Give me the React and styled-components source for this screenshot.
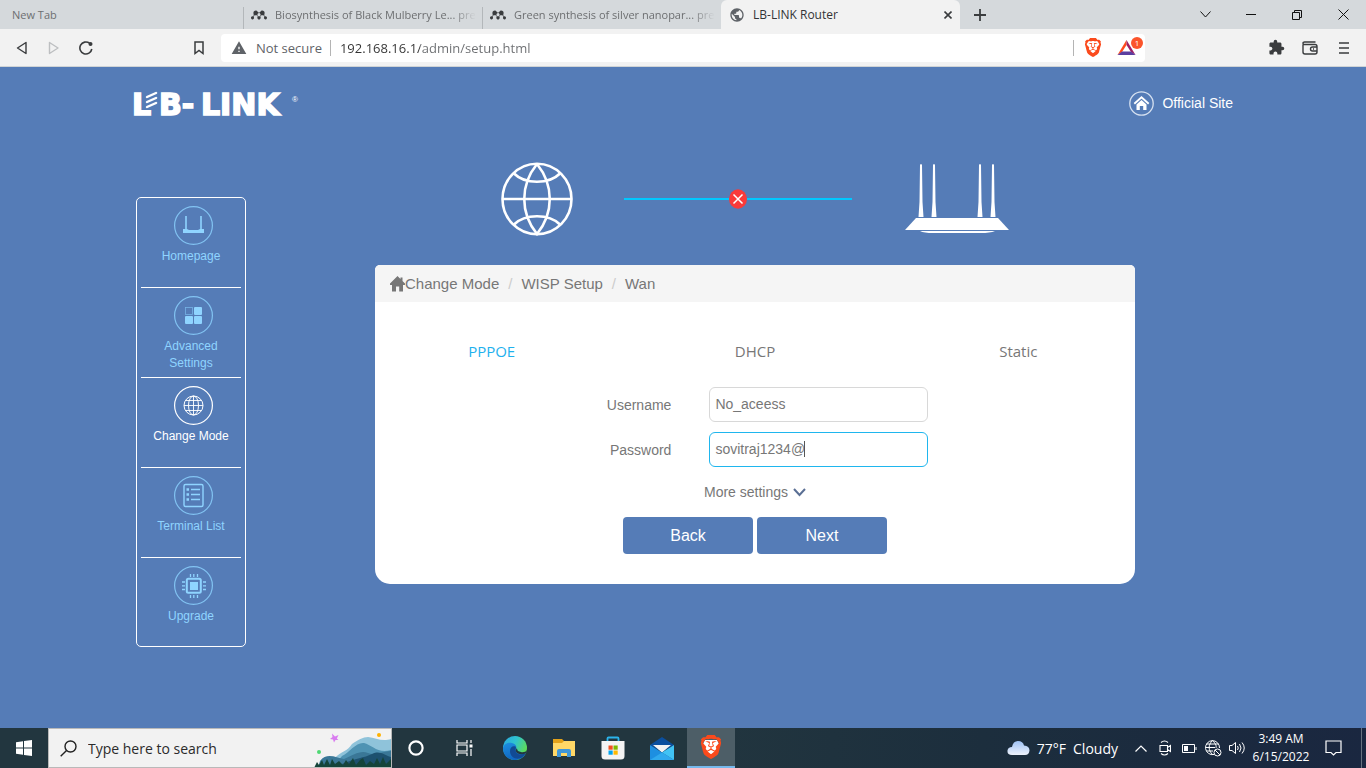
import React from "react";
import styled, { createGlobalStyle, css } from "styled-components";
import { SiBrave, SiMendeley } from "react-icons/si";
import { MdPublic, MdExtension, MdWarning } from "react-icons/md";

const ui = `"Open Sans", "Noto Sans", sans-serif`;
const arial = `"Liberation Sans", Arial, sans-serif`;

const GlobalStyle = createGlobalStyle`
  *, *::before, *::after { box-sizing: border-box; }
  body { margin: 0; font-family: ${arial}; background: #557cb7; }
  button, input { font: inherit; margin: 0; }
  button { border: 0; padding: 0; background: none; color: inherit; }
  a { color: inherit; text-decoration: none; }
  svg { display: block; flex: none; }
`;

const Screen = styled.div`
  display: flex;
  flex-direction: column;
  min-height: 100vh;
`;

/* ---------- browser chrome ---------- */

const TabStrip = styled.div`
  display: flex;
  align-items: stretch;
  height: 29px;
  background: #d5d9dc;
  font-family: ${ui};
  font-size: 11px;
  color: #6d6f71;
`;

const Tab = styled.div`
  display: flex;
  align-items: center;
  gap: 8px;
  flex: 0 1 239px;
  min-width: 0;
  padding: 0 6px 0 8px;
  ${(p) =>
    p.$divided &&
    css`
      background: linear-gradient(#b3b7ba, #b3b7ba) left bottom / 1px 22px no-repeat;
    `}
  ${(p) =>
    p.$plain &&
    css`
      flex-basis: 243px;
      padding-left: 12px;
    `}
  ${(p) =>
    p.$active &&
    css`
      background: #f2f2f2;
      border-radius: 6px 6px 0 0;
      font-size: 12px;
      color: #333436;
    `}
`;

const TabTitle = styled.span`
  flex: 1;
  min-width: 0;
  overflow: hidden;
  white-space: nowrap;
  mask-image: ${(p) => (p.$fade ? "linear-gradient(90deg, #000 88%, transparent)" : "none")};
`;

const IconButton = styled.button`
  display: flex;
  align-items: center;
  justify-content: center;
  flex: none;
  width: ${(p) => p.$w || 32}px;
  color: ${(p) => p.$color || "#3a3c3e"};
`;

const WindowControls = styled.div`
  display: flex;
  margin-left: auto;
`;

const Toolbar = styled.div`
  display: flex;
  align-items: center;
  height: 38px;
  background: #f2f2f2;
  border-bottom: 1px solid #d0d4d6;
  font-family: ${ui};
`;

const NavButtons = styled.div`
  display: flex;
  width: 221px;
  padding: 0 6px;
`;

const BookmarkSlot = styled.div`
  display: flex;
  margin-left: auto;
`;

const Omnibox = styled.div`
  display: flex;
  align-items: center;
  flex: 1;
  height: 28px;
  padding-left: 10px;
  border-radius: 4px;
  background: #fff;
  font-size: 13px;
  color: #5f6368;
`;

const SecurityLabel = styled.span`
  margin: 0 8px 0 9px;
  white-space: nowrap;
`;

const Divider = styled.span`
  width: 1px;
  height: 16px;
  background: #b4b4b4;
`;

const UrlInput = styled.input`
  flex: 1;
  min-width: 0;
  padding: 0 9px;
  border: 0;
  outline: 0;
  color: transparent;
  background: linear-gradient(90deg, #333 89px, #6b6d70 89px);
  background-clip: text;
`;

const ShieldSlot = styled.span`
  display: flex;
  margin: 0 16px 0 11px;
`;

const RewardsSlot = styled.span`
  position: relative;
  display: flex;
  padding-right: 9px;
`;

const RewardsBadge = styled.span`
  position: absolute;
  top: -2px;
  right: 2px;
  width: 12px;
  height: 12px;
  border-radius: 6px;
  background: #fb542b;
  color: #fff;
  font-size: 8px;
  line-height: 12px;
  text-align: center;
`;

const ToolbarActions = styled.div`
  display: flex;
  justify-content: flex-end;
  width: 221px;
  padding-right: 5px;
`;

/* ---------- router page ---------- */

const Page = styled.main`
  flex: 1;
  background: #557cb7;
  color: #fff;
`;

const Container = styled.div`
  width: 100%;
  max-width: 1100px;
  margin: 0 auto;
`;

const SiteHeader = styled.header`
  display: flex;
  justify-content: space-between;
  padding-top: 20px;
`;

const OfficialLink = styled.a`
  display: flex;
  align-items: center;
  gap: 8px;
  height: 32px;
  font-size: 14px;
`;

const Columns = styled.div`
  display: flex;
  align-items: flex-start;
  padding: 37px 98px 0 3px;
`;

const SideNav = styled.nav`
  flex: none;
  width: 110px;
  margin: 35px 129px 0 0;
  padding: 0 4px;
  border: 1px solid #fff;
  border-radius: 5px;
`;

const SideItem = styled.a`
  display: flex;
  flex-direction: column;
  align-items: center;
  height: 90px;
  padding-top: 8px;
  border-bottom: 1px solid #fff;
  font-size: 12px;
  line-height: 17px;
  text-align: center;
  color: ${(p) => (p.$current ? "#fff" : "#8fd4ff")};
  &:last-child {
    height: 88px;
    border-bottom: 0;
  }
  svg {
    margin: 0 0 3px 4px;
  }
`;

const Content = styled.section`
  flex: 1;
  min-width: 0;
`;

const Topology = styled.div`
  display: flex;
  align-items: center;
  padding: 0 126px;
  height: 74px;
`;

const Link = styled.div`
  display: flex;
  align-items: center;
  flex: 1;
  margin: 0 53px 0 51px;
  &::before,
  &::after {
    content: "";
    flex: 1;
    height: 2px;
    background: #00c8ff;
  }
`;

const Card = styled.div`
  margin-top: 29px;
  padding-bottom: 30px;
  border-radius: 5px 5px 15px 15px;
  background: #fff;
  color: #777;
`;

const Breadcrumb = styled.div`
  display: flex;
  align-items: center;
  height: 37px;
  padding: 0 15px;
  border-radius: 5px 5px 0 0;
  background: #f5f5f5;
  font-size: 15px;
`;

const Slash = styled.span`
  margin: 0 9px;
  color: #ccc;
`;

const ModeTabs = styled.div`
  display: grid;
  grid-template-columns: repeat(3, 1fr);
  margin: 39px -15px 0;
  font-family: ${ui};
  font-size: 15px;
  line-height: 20px;
`;

const ModeTab = styled.button`
  color: ${(p) => (p.$active ? "#1fb1ee" : "#777")};
`;

const Form = styled.form`
  display: flex;
  flex-direction: column;
  gap: 10px;
  margin-top: 26px;
  font-size: 14px;
`;

const Field = styled.div`
  display: grid;
  grid-template-columns: 39% 1fr;
  column-gap: 38px;
  align-items: center;
`;

const FieldLabel = styled.label`
  text-align: right;
`;

const InputWrap = styled.div`
  position: relative;
  width: 219px;
`;

const TextInput = styled.input`
  width: 100%;
  height: 35px;
  padding: 0 5px 2px;
  border: 1px solid ${(p) => (p.$active ? "#1fb6ee" : "#d8d8d8")};
  border-radius: 6px;
  outline: 0;
  background: #fff;
  color: #777;
`;

const Caret = styled.span`
  position: absolute;
  top: 9px;
  left: 95px;
  width: 1px;
  height: 16px;
  background: #555;
`;

const MoreSettings = styled.button`
  display: flex;
  align-items: center;
  align-self: center;
  gap: 5px;
  height: 20px;
  margin: 5px 0;
`;

const Actions = styled.div`
  display: flex;
  justify-content: center;
  gap: 4px;
`;

const ActionButton = styled.button`
  width: 130px;
  height: 37px;
  border-radius: 4px;
  background: #557cb7;
  color: #fff;
  font-size: 16px;
`;

/* ---------- taskbar ---------- */

const Taskbar = styled.footer`
  display: flex;
  height: 40px;
  background: linear-gradient(90deg, #22363f 0%, #22363f 50%, #1c2e3d 72%, #1a2740 100%);
  color: #fff;
  font-family: ${ui};
`;

const TaskButton = styled.button`
  display: flex;
  align-items: center;
  justify-content: center;
  width: 48px;
  background: ${(p) => (p.$active ? "#4d5e67" : "none")};
  border-bottom: ${(p) => (p.$active ? "2px solid #76b9ed" : "0")};
`;

const TaskSearch = styled.label`
  display: flex;
  align-items: center;
  width: 344px;
  padding-left: 11px;
  border: 1px solid #b9b9b9;
  background: #f2f2f2;
  overflow: hidden;
`;

const TaskSearchInput = styled.input`
  flex: 1;
  min-width: 0;
  padding: 0 0 0 11px;
  border: 0;
  outline: 0;
  background: none;
  font-size: 14px;
  &::placeholder {
    color: #2b2b2b;
    opacity: 1;
  }
`;

const PinnedApps = styled.div`
  display: flex;
  gap: 1px;
  margin-left: 3px;
`;

const Tray = styled.div`
  display: flex;
  align-items: stretch;
  margin-left: auto;
`;

const Weather = styled.button`
  display: flex;
  align-items: center;
  gap: 7px;
  margin-right: 11px;
  font-size: 14px;
`;

const Clock = styled.div`
  display: flex;
  flex-direction: column;
  justify-content: center;
  width: 64px;
  font-size: 12px;
  line-height: 18px;
  text-align: center;
`;

const ShowDesktop = styled.button`
  width: 5px;
  margin-left: 8px;
  border-left: 1px solid #66727f;
`;

/* ---------- drawings ---------- */

const Stroke = ({ w, h, sw = 1, children, ...rest }) => (
  <svg width={w} height={h} viewBox={`0 0 ${w} ${h}`} fill="none" stroke="currentColor" strokeWidth={sw} aria-hidden="true" {...rest}>
    {children}
  </svg>
);

const BraveIcon = ({ w, h }) => (
  <svg width={w} height={h} viewBox="2 0 20 24" aria-hidden="true">
    <path d="M6 5 L18 5 L20 9 L17 18 L12 22 L7 18 L4 9Z" fill="#fff" />
    <SiBrave size={24} color="#fb4a1c" />
  </svg>
);

const BatIcon = () => (
  <svg width="19" height="17" viewBox="0 0 19 17" aria-hidden="true">
    <path d="M9.5 1 L0.5 16 L5 13 L9.5 6Z" fill="#ff4a1c" />
    <path d="M9.5 1 L18.5 16 L14 13 L9.5 6Z" fill="#9e1f63" />
    <path d="M0.5 16 H18.5 L14 12.500 H5Z" fill="#5b3fa0" />
  </svg>
);

const Logo = () => (
  <svg width="168" height="38" viewBox="0 0 168 38" role="img" aria-label="LB-LINK">
    <g fill="#fff" stroke="#fff" strokeWidth="1.600" fontFamily="DejaVu Sans" fontWeight="700" fontSize="30">
      <text x="-1" y="28">L</text>
      <text x="26" y="28">B-</text>
      <text x="68" y="28">LINK</text>
    </g>
    <g stroke="#fff" strokeWidth="2.400" strokeLinecap="round">
      <path d="M14 10 L23 6" />
      <path d="M14 15 L23 11" />
      <path d="M14 20 L23 16" />
    </g>
    <text x="159" y="15" fill="#fff" fontFamily="Liberation Sans" fontSize="8">®</text>
  </svg>
);

const OfficialIcon = () => (
  <Stroke w={25} h={25}>
    <circle cx="12.500" cy="12.500" r="11.700" stroke="#d5e0f0" strokeWidth="1.300" />
    <path d="M5.300 12.800 L12.500 6.300 L19.700 12.800" stroke="#fff" strokeWidth="1.900" />
    <path d="M7.500 13.500 L12.500 9 L17.500 13.500 V19 H14.200 V15 H10.800 V19 H7.500Z" fill="#fff" stroke="none" />
  </Stroke>
);

const Circle = ({ children, ring = "#82c3f2" }) => (
  <Stroke w={39} h={39}>
    <circle cx="19.500" cy="19.500" r="18.900" stroke={ring} strokeWidth="1.200" />
    {children}
  </Stroke>
);

const HomepageIcon = () => (
  <Circle>
    <path d="M12 10 V23 M27 10 V23" strokeWidth="1.600" />
    <path d="M9 23 H13 L15 24 H24 L26 23 H30 V27 H9Z" fill="currentColor" stroke="none" />
  </Circle>
);

const AdvancedIcon = () => (
  <Circle>
    <rect x="11.500" y="11.500" width="7" height="7" strokeWidth="0.800" stroke="#77b4e6" />
    <g fill="currentColor" stroke="none">
      <rect x="20" y="11" width="8" height="8" rx="1" />
      <rect x="11" y="20" width="8" height="8" rx="1" />
      <rect x="20" y="20" width="8" height="8" rx="1" />
    </g>
  </Circle>
);

const ModeIcon = () => (
  <Circle ring="#fff">
    <circle cx="19.500" cy="19.500" r="9.500" />
    <ellipse cx="19.500" cy="19.500" rx="5" ry="9.500" />
    <path d="M19.500 10 V29 M10 19.500 H29 M11.500 14.500 H27.500 M11.500 24.500 H27.500" strokeWidth="0.900" />
  </Circle>
);

const TerminalIcon = () => (
  <Circle>
    <rect x="10" y="8.500" width="19" height="22" rx="1.500" strokeWidth="1.400" />
    <path d="M17 13.500 H26 M17 18.500 H26 M17 23.500 H26" strokeWidth="1.300" />
    <path d="M12.500 13.500 H15 M12.500 18.500 H15 M12.500 23.500 H15" strokeWidth="2.400" />
  </Circle>
);

const UpgradeIcon = () => (
  <Circle>
    <rect x="12.800" y="12.800" width="14" height="14" rx="1.500" strokeWidth="2" />
    <rect x="16" y="16" width="8" height="8" fill="currentColor" stroke="none" />
    <path d="M16.500 8 V11 M19.800 8 V11 M23.500 8 V11 M16.500 29 V32 M19.800 29 V32 M23.500 29 V32 M8 16 H11 M8 19.800 H11 M8 23.500 H11 M29 16 H32 M29 19.800 H32 M29 23.500 H32" strokeWidth="1.300" />
  </Circle>
);

const BigGlobe = () => (
  <Stroke w={72} h={74} sw={2.600}>
    <ellipse cx="36" cy="37" rx="34.500" ry="35.200" />
    <path d="M1.500 37 H70.500 M36 2 C19 23 19 51 36 72 C53 51 53 23 36 2 M13 11.500 C24 22.500 48 22.500 59 11.500 M13 62.500 C24 51.500 48 51.500 59 62.500" />
  </Stroke>
);

const BigRouter = () => (
  <svg width="104" height="74" viewBox="0 0 104 74" fill="#fff" aria-hidden="true">
    {[16, 29, 75, 88].map((x) => (
      <path key={x} d={`M${x - 1} 3 Q${x} 1 ${x + 1} 3 L${x + 1.5} 40 L${x + 2.5} 55 H${x - 2.5} L${x - 1.5} 40Z`} />
    ))}
    <path d="M11 56 H93 L104 68 H0Z" />
    <path d="M15 69 H90 Q85 71 76 71 H28 Q19 71 15 69Z" />
  </svg>
);

const ErrorDot = () => (
  <Stroke w={18} h={20} sw={1.500}>
    <ellipse cx="9" cy="10" rx="9" ry="9.700" fill="#f93a3a" stroke="none" />
    <path d="M4.500 5.500 L13.500 14.500 M13.500 5.500 L4.500 14.500" stroke="#fff" />
  </Stroke>
);

const HomeGlyph = () => (
  <svg width="15" height="16" viewBox="0 0 15 16" fill="#777" aria-hidden="true">
    <path d="M7.500 0 L10.500 3 V1.500 H12.500 V5 L15.500 8 L14.800 9 H13 V15.500 H9.200 V10.500 H6 V15.500 H2 V9 H0.200 L-0.500 8Z" />
  </svg>
);

const SearchArt = () => (
  <svg width="77" height="40" viewBox="0 0 77 40" aria-hidden="true">
    <path d="M20 31 C28 22 33 24 38 16 C44 12 49 9 54 9 C62 10 68 14 77 11 V40 H12Z" fill="#8fc3da" />
    <path d="M28 28 C36 24 42 14 50 15 C58 17 64 26 77 22 V40 H18Z" fill="#4f93b3" />
    <path d="M6 33 C13 24 22 30 30 31 C40 27 46 22 54 25 C60 28 66 24 77 23 V40 H4Z" fill="#3a7797" />
    <path d="M28 36 C42 30 50 30 58 26 C66 22 70 27 77 29 V40 H24Z" fill="#1d516f" />
    <path d="M0 40 L3 34 L5 37 L8 32 L10 37 L13 31 L16 37 L18 31 L21 36 L25 33 L29 37 L32 32 L35 36 L39 30 L42 37 L46 32 L49 30 L52 37 L56 33 L60 36 L63 30 L66 36 L69 29 L72 36 L77 31 V40Z" fill="#15443a" />
    <path d="M18 5.500 L21 8.500 L24.500 7 L22.800 10.500 L24.500 12 L21.500 12 L20 14.500 L19 11.500 L16 11 L18.500 9Z" fill="#d97cf0" />
    <circle cx="65" cy="7" r="2" fill="#ffb200" />
    <circle cx="5" cy="24" r="2" fill="#4fd873" />
  </svg>
);

const WindowsLogo = () => (
  <svg width="16" height="16" viewBox="0 0 16 16" fill="#fff" aria-hidden="true">
    <path d="M0 2.200 L7 1.200 V7.500 H0Z M8 1 L16 0 V7.500 H8Z M0 8.500 H7 V14.800 L0 13.800Z M8 8.500 H16 V16 L8 15Z" />
  </svg>
);

const EdgeIcon = () => (
  <svg width="24" height="24" viewBox="0 0 24 24" aria-hidden="true">
    <defs>
      <linearGradient id="edgeTop" x1="0" y1="0" x2="1" y2="0.500">
        <stop offset="0" stopColor="#2aa5e0" />
        <stop offset="0.500" stopColor="#2fc3d0" />
        <stop offset="1" stopColor="#5fdc55" />
      </linearGradient>
      <linearGradient id="edgeSide" x1="0" y1="0" x2="0.300" y2="1">
        <stop offset="0" stopColor="#1d8fe0" />
        <stop offset="1" stopColor="#1066c0" />
      </linearGradient>
    </defs>
    <circle cx="12" cy="12" r="12" fill="url(#edgeTop)" />
    <path d="M0 12 C1 7 6 6 9 7 C13 8 14 11 13 13 C12 15 14 18 18 18 C20 18 22 17 23 17 C20 23 15 24 12 24 C5 24 0 19 0 12Z" fill="url(#edgeSide)" />
    <path d="M7 15 C7 11 10 9.500 12.500 10.500 C13.500 12 12.500 13 12.500 14 C12.500 17 15 18.500 18 18.500 C20 18.500 22 17.500 22.600 17.600 C20 22 16 23 13.500 22.600 C9.500 22 7 19 7 15Z" fill="#124a94" />
    <path d="M13.500 12 C14 13 12.600 13.500 12.600 14.500 C13 18 19 19.500 23 17.300 C23.300 16.700 24 15 24 14 C23 16 20 16.500 18 16 C15.500 15.500 14 14.500 14.200 13Z" fill="#22363f" />
  </svg>
);

const ExplorerIcon = () => (
  <svg width="22" height="18" viewBox="0 0 22 18" aria-hidden="true">
    <path d="M0 0 H9 L11 2 H22 V6 H0Z" fill="#e3a21a" />
    <path d="M0 4 H9 L11 2 H22 V17 H0Z" fill="#ffd867" />
    <path d="M4 18 V12 Q4 10 6 10 H16 Q18 10 18 12 V18 H14 V14 H8 V18Z" fill="#3f97d9" />
  </svg>
);

const StoreIcon = () => (
  <svg width="24" height="24" viewBox="0 0 24 24" aria-hidden="true">
    <path d="M6.500 6 V2.500 Q6.500 1.500 7.500 1.500 H16.500 Q17.500 1.500 17.500 2.500 V6" fill="none" stroke="#2bb4ec" strokeWidth="1.800" />
    <path d="M0.500 5 H23.500 V20 Q23.500 23.500 20 23.500 H4 Q0.500 23.500 0.500 20Z" fill="#f4f4f4" />
    <rect x="7.500" y="9.500" width="4.200" height="4.200" fill="#f25022" />
    <rect x="12.500" y="9.500" width="4.200" height="4.200" fill="#7fba00" />
    <rect x="7.500" y="14.500" width="4.200" height="4.200" fill="#00a4ef" />
    <rect x="12.500" y="14.500" width="4.200" height="4.200" fill="#ffb900" />
  </svg>
);

const MailIcon = () => (
  <svg width="24" height="23" viewBox="0 0 24 23" aria-hidden="true">
    <path d="M0 8 L12 0 L24 8 L12 15Z" fill="#0b4f9e" />
    <path d="M3 8 H21 L12 15.500Z" fill="#f3f3f3" />
    <path d="M0 8 L24 23 H0Z" fill="#1d8fe1" />
    <path d="M24 8 L12 15.500 L24 23Z" fill="#41c3f5" />
    <path d="M12 15.500 L0 23 H24Z" fill="#2fa9ee" />
  </svg>
);

const CloudIcon = () => (
  <svg width="23" height="16" viewBox="0 0 23 16" aria-hidden="true">
    <defs>
      <linearGradient id="cloud" x1="0" y1="0" x2="0" y2="1">
        <stop offset="0" stopColor="#9fc2f5" />
        <stop offset="1" stopColor="#edf2fb" />
      </linearGradient>
    </defs>
    <path d="M5 15 Q0 15 0.500 10.500 Q1 7 5 7 Q6 1 11 1 Q16 1 17 5.500 Q22.500 6 22.500 10.500 Q22 15 18 15Z" fill="url(#cloud)" />
  </svg>
);

const navItems = [
  ["Homepage", HomepageIcon],
  ["Advanced Settings", AdvancedIcon],
  ["Change Mode", ModeIcon],
  ["Terminal List", TerminalIcon],
  ["Upgrade", UpgradeIcon],
];

function BrowserChrome() {
  return (
    <>
      <TabStrip>
        <Tab $plain>
          <TabTitle>New Tab</TabTitle>
        </Tab>
        <Tab $divided>
          <SiMendeley size={16} color="#3a3c3e" />
          <TabTitle $fade>Biosynthesis of Black Mulberry Le... pre</TabTitle>
        </Tab>
        <Tab $divided>
          <SiMendeley size={16} color="#3a3c3e" />
          <TabTitle $fade>Green synthesis of silver nanopar... pre</TabTitle>
        </Tab>
        <Tab $active>
          <MdPublic size={16} color="#5f6368" />
          <TabTitle>LB-LINK Router</TabTitle>
          <IconButton $w={12} aria-label="Close tab">
            <Stroke w={8} h={8} sw={1.600}><path d="M0.500 0.500 L7.500 7.500 M7.500 0.500 L0.500 7.500" /></Stroke>
          </IconButton>
        </Tab>
        <IconButton $w={40} aria-label="New tab">
          <Stroke w={12} h={12} sw={1.800}><path d="M6 0 V12 M0 6 H12" /></Stroke>
        </IconButton>
        <WindowControls>
          <IconButton $w={46} $color="#111" aria-label="Search tabs">
            <Stroke w={11} h={7}><path d="M0.500 0.500 L5.500 6 L10.500 0.500" /></Stroke>
          </IconButton>
          <IconButton $w={46} $color="#111" aria-label="Minimize">
            <Stroke w={10} h={1}><path d="M0 0.500 H10" /></Stroke>
          </IconButton>
          <IconButton $w={46} $color="#111" aria-label="Restore">
            <Stroke w={10} h={10}><path d="M0.500 2.500 H7.500 V9.500 H0.500Z M2.500 2.500 V0.500 H9.500 V7.500 H7.500" /></Stroke>
          </IconButton>
          <IconButton $w={46} $color="#111" aria-label="Close window">
            <Stroke w={11} h={11}><path d="M0.500 0.500 L10.500 10.500 M10.500 0.500 L0.500 10.500" /></Stroke>
          </IconButton>
        </WindowControls>
      </TabStrip>
      <Toolbar>
        <NavButtons>
          <IconButton aria-label="Back">
            <Stroke w={12} h={14} sw={1.400} strokeLinejoin="round"><path d="M10 1.500 V12.500 L1.500 7Z" /></Stroke>
          </IconButton>
          <IconButton $color="#bdbfc1" aria-label="Forward">
            <Stroke w={12} h={14} sw={1.400} strokeLinejoin="round"><path d="M1.500 1.500 V12.500 L10 7Z" /></Stroke>
          </IconButton>
          <IconButton aria-label="Reload">
            <Stroke w={14} h={14} sw={1.600}>
              <path d="M12.800 8 A6 6 0 1 1 10.500 2.200" />
              <circle cx="11.500" cy="3" r="2" fill="currentColor" stroke="none" />
            </Stroke>
          </IconButton>
          <BookmarkSlot>
            <IconButton aria-label="Bookmark this page">
              <Stroke w={10} h={14} sw={1.500}><path d="M1 1 H9 V12.500 L5 9.500 L1 12.500Z" /></Stroke>
            </IconButton>
          </BookmarkSlot>
        </NavButtons>
        <Omnibox>
          <MdWarning size={16} color="#5f6368" />
          <SecurityLabel>Not secure</SecurityLabel>
          <Divider />
          <UrlInput aria-label="Address" defaultValue="192.168.16.1/admin/setup.html" />
          <Divider />
          <ShieldSlot><BraveIcon w={16} h={19} /></ShieldSlot>
          <RewardsSlot>
            <BatIcon />
            <RewardsBadge>1</RewardsBadge>
          </RewardsSlot>
        </Omnibox>
        <ToolbarActions>
          <IconButton $w={34} aria-label="Extensions"><MdExtension size={17} /></IconButton>
          <IconButton $w={34} aria-label="Wallet">
            <Stroke w={16} h={14} sw={1.400}>
              <path d="M1 3.500 V11 Q1 13 3 13 H13 Q15 13 15 11 V5.500 Q15 3.500 13 3.500 H2.500 Q1 3.500 1 2.200 Q1 1 2.500 1 H13.500 M15 6 H10.500 Q8.500 6 8.500 8 Q8.500 10 10.500 10 H15 M11 8 H12" />
            </Stroke>
          </IconButton>
          <IconButton $w={34} aria-label="Menu">
            <Stroke w={10} h={12} sw={1.500}><path d="M0 1 H10 M0 6 H10 M0 11 H10" /></Stroke>
          </IconButton>
        </ToolbarActions>
      </Toolbar>
    </>
  );
}

function RouterPage() {
  return (
    <Page>
      <Container>
        <SiteHeader>
          <Logo />
          <OfficialLink href="#official"><OfficialIcon />Official Site</OfficialLink>
        </SiteHeader>
        <Columns>
          <SideNav>
            {navItems.map(([label, Icon]) => (
              <SideItem key={label} href="#nav" $current={label === "Change Mode"}>
                <Icon />
                {label}
              </SideItem>
            ))}
          </SideNav>
          <Content>
            <Topology>
              <BigGlobe />
              <Link><ErrorDot /></Link>
              <BigRouter />
            </Topology>
            <Card>
              <Breadcrumb>
                <HomeGlyph />
                <a href="#mode">Change Mode</a>
                <Slash>/</Slash>
                <a href="#wisp">WISP Setup</a>
                <Slash>/</Slash>
                <span>Wan</span>
              </Breadcrumb>
              <ModeTabs>
                <ModeTab $active>PPPOE</ModeTab>
                <ModeTab>DHCP</ModeTab>
                <ModeTab>Static</ModeTab>
              </ModeTabs>
              <Form onSubmit={(e) => e.preventDefault()}>
                <Field>
                  <FieldLabel htmlFor="username">Username</FieldLabel>
                  <InputWrap>
                    <TextInput id="username" defaultValue="No_aceess" />
                  </InputWrap>
                </Field>
                <Field>
                  <FieldLabel htmlFor="password">Password</FieldLabel>
                  <InputWrap>
                    <TextInput id="password" $active defaultValue="sovitraj1234@" />
                    <Caret />
                  </InputWrap>
                </Field>
                <MoreSettings type="button">
                  More settings
                  <Stroke w={13} h={9} sw={2}><path d="M1 1 L6.500 7 L12 1" stroke="#5a6f94" /></Stroke>
                </MoreSettings>
                <Actions>
                  <ActionButton type="button">Back</ActionButton>
                  <ActionButton type="submit">Next</ActionButton>
                </Actions>
              </Form>
            </Card>
          </Content>
        </Columns>
      </Container>
    </Page>
  );
}

function WindowsTaskbar() {
  return (
    <Taskbar>
      <TaskButton aria-label="Start"><WindowsLogo /></TaskButton>
      <TaskSearch>
        <Stroke w={17} h={17} sw={1.400} color="#222"><circle cx="10.500" cy="6.500" r="5.500" /><path d="M6.500 10.500 L0.700 16.300" /></Stroke>
        <TaskSearchInput aria-label="Search" placeholder="Type here to search" />
        <SearchArt />
      </TaskSearch>
      <TaskButton aria-label="Cortana">
        <Stroke w={16} h={16} sw={2.200}><circle cx="8" cy="8" r="6.600" /></Stroke>
      </TaskButton>
      <TaskButton aria-label="Task view">
        <Stroke w={17} h={16} sw={1.200}>
          <path d="M1 0 V3 H11 V0 M1 16 V13 H11 V16 M1 5 H11 V11 H1Z M15 0 V3 M15 9 V16" />
          <rect x="13.500" y="4.500" width="3" height="3" fill="currentColor" stroke="none" />
        </Stroke>
      </TaskButton>
      <PinnedApps>
        <TaskButton aria-label="Edge"><EdgeIcon /></TaskButton>
        <TaskButton aria-label="File Explorer"><ExplorerIcon /></TaskButton>
        <TaskButton aria-label="Store"><StoreIcon /></TaskButton>
        <TaskButton aria-label="Mail"><MailIcon /></TaskButton>
        <TaskButton $active aria-label="Brave"><BraveIcon w={20} h={24} /></TaskButton>
      </PinnedApps>
      <Tray>
        <Weather>
          <CloudIcon />
          <span>77°F</span>
          <span>Cloudy</span>
        </Weather>
        <IconButton $w={24} $color="#fff" aria-label="Hidden icons">
          <Stroke w={12} h={7} sw={1.200}><path d="M0.500 6.500 L6 1 L11.500 6.500" /></Stroke>
        </IconButton>
        <IconButton $w={24} $color="#fff" aria-label="Meet Now">
          <Stroke w={12} h={16} sw={1.100}>
            <path d="M1 5.500 H8.500 V11.500 H1Z M8.500 7.500 L11.500 5.500 V11.500 L8.500 9.500 M2 2.500 Q5.500 -0.500 9 2.500 M2 13.500 Q5.500 16.500 9 13.500" />
          </Stroke>
        </IconButton>
        <IconButton $w={24} $color="#fff" aria-label="Battery">
          <Stroke w={15} h={9}><path d="M0.500 0.500 H12.500 V8.500 H0.500Z M14 3 V6" /><rect x="2" y="2" width="4" height="5" fill="currentColor" stroke="none" /></Stroke>
        </IconButton>
        <IconButton $w={24} $color="#fff" aria-label="Network">
          <Stroke w={17} h={17}>
            <path d="M9 14.500 A7 7 0 1 1 14.500 8 M7.500 0.500 C3 5 3 10 7.500 14.500 M7.500 0.500 C11 4 11.500 6 11 8 M0.500 7.500 H10 M1.500 4 H13.500 M1.500 11 H8" />
            <circle cx="12.500" cy="12.500" r="3.500" /><path d="M10 10 L15 15" />
          </Stroke>
        </IconButton>
        <IconButton $w={24} $color="#fff" aria-label="Volume">
          <Stroke w={17} h={14}>
            <path d="M0.500 4.500 H3 L6.500 1.500 V12.500 L3 9.500 H0.500Z M8.500 5 Q10 7 8.500 9 M10.500 3 Q13.500 7 10.500 11 M13 1.500 Q17.500 7 13 12.500" />
          </Stroke>
        </IconButton>
        <Clock>
          <span>3:49 AM</span>
          <span>6/15/2022</span>
        </Clock>
        <IconButton $w={40} $color="#fff" aria-label="Notifications">
          <Stroke w={17} h={16} sw={1.200}><path d="M1 1 H16 V12.500 H11 L8.500 15 L6 12.500 H1Z" /></Stroke>
        </IconButton>
        <ShowDesktop aria-label="Show desktop" />
      </Tray>
    </Taskbar>
  );
}

export default function App() {
  return (
    <Screen>
      <GlobalStyle />
      <BrowserChrome />
      <RouterPage />
      <WindowsTaskbar />
    </Screen>
  );
}
